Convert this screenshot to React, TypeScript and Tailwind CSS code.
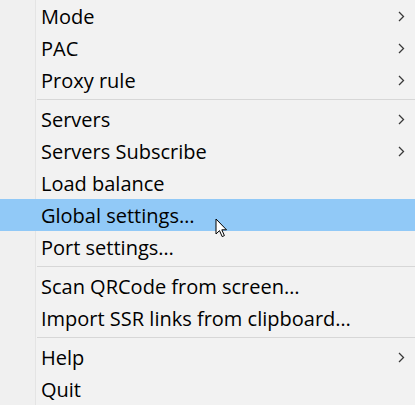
import { Fragment } from "react";

type Item = { label: string; submenu?: boolean; active?: boolean } | "sep";

const items: Item[] = [
  { label: "Mode", submenu: true },
  { label: "PAC", submenu: true },
  { label: "Proxy rule", submenu: true },
  "sep",
  { label: "Servers", submenu: true },
  { label: "Servers Subscribe", submenu: true },
  { label: "Load balance" },
  { label: "Global settings…", active: true },
  { label: "Port settings…" },
  "sep",
  { label: "Scan QRCode from screen…" },
  { label: "Import SSR links from clipboard…" },
  "sep",
  { label: "Help", submenu: true },
  { label: "Quit" },
];

function Chevron() {
  return (
    <svg width="7" height="11" viewBox="0 0 7 11" className="shrink-0" aria-hidden="true">
      <path d="M1 1 L5.5 5.5 L1 10" fill="none" stroke="#3a3a3a" strokeWidth="1.3" />
    </svg>
  );
}

function Pointer() {
  return (
    <svg width="13" height="20" viewBox="0 0 13 20" className="pointer-events-none absolute left-[215px] top-[218px]" aria-hidden="true">
      <path
        d="M1 1 L1 16 L4.5 12.6 L7.2 18.6 L9.4 17.6 L6.8 11.8 L11.5 11.8 Z"
        fill="#ffffff"
        stroke="#000000"
        strokeWidth="1"
        strokeLinejoin="miter"
      />
    </svg>
  );
}

export default function App() {
  return (
    <div className="relative h-[405px] w-[415px] overflow-hidden bg-[#f2f2f2] font-['Segoe_UI','Open_Sans',sans-serif] text-[20px] text-black">
      <div className="absolute inset-y-0 left-0 w-[36px] border-r border-[#e4e4e4] bg-[#f0f0f0]" />
      <div className="relative flex flex-col">
        {items.map((item, i) =>
          item === "sep" ? (
            <div key={i} className="py-[3px] pl-[37px]">
              <div className="h-px bg-[#d7d7d7]" />
            </div>
          ) : (
            <Fragment key={i}>
              <div
                className={`flex h-[32px] items-center justify-between pl-[41px] pr-[10px] ${
                  item.active ? "bg-[#91c9f7]" : ""
                }`}
              >
                <span className="relative top-[1px] leading-none">{item.label}</span>
                {item.submenu && <Chevron />}
              </div>
            </Fragment>
          )
        )}
      </div>
      <Pointer />
    </div>
  );
}
